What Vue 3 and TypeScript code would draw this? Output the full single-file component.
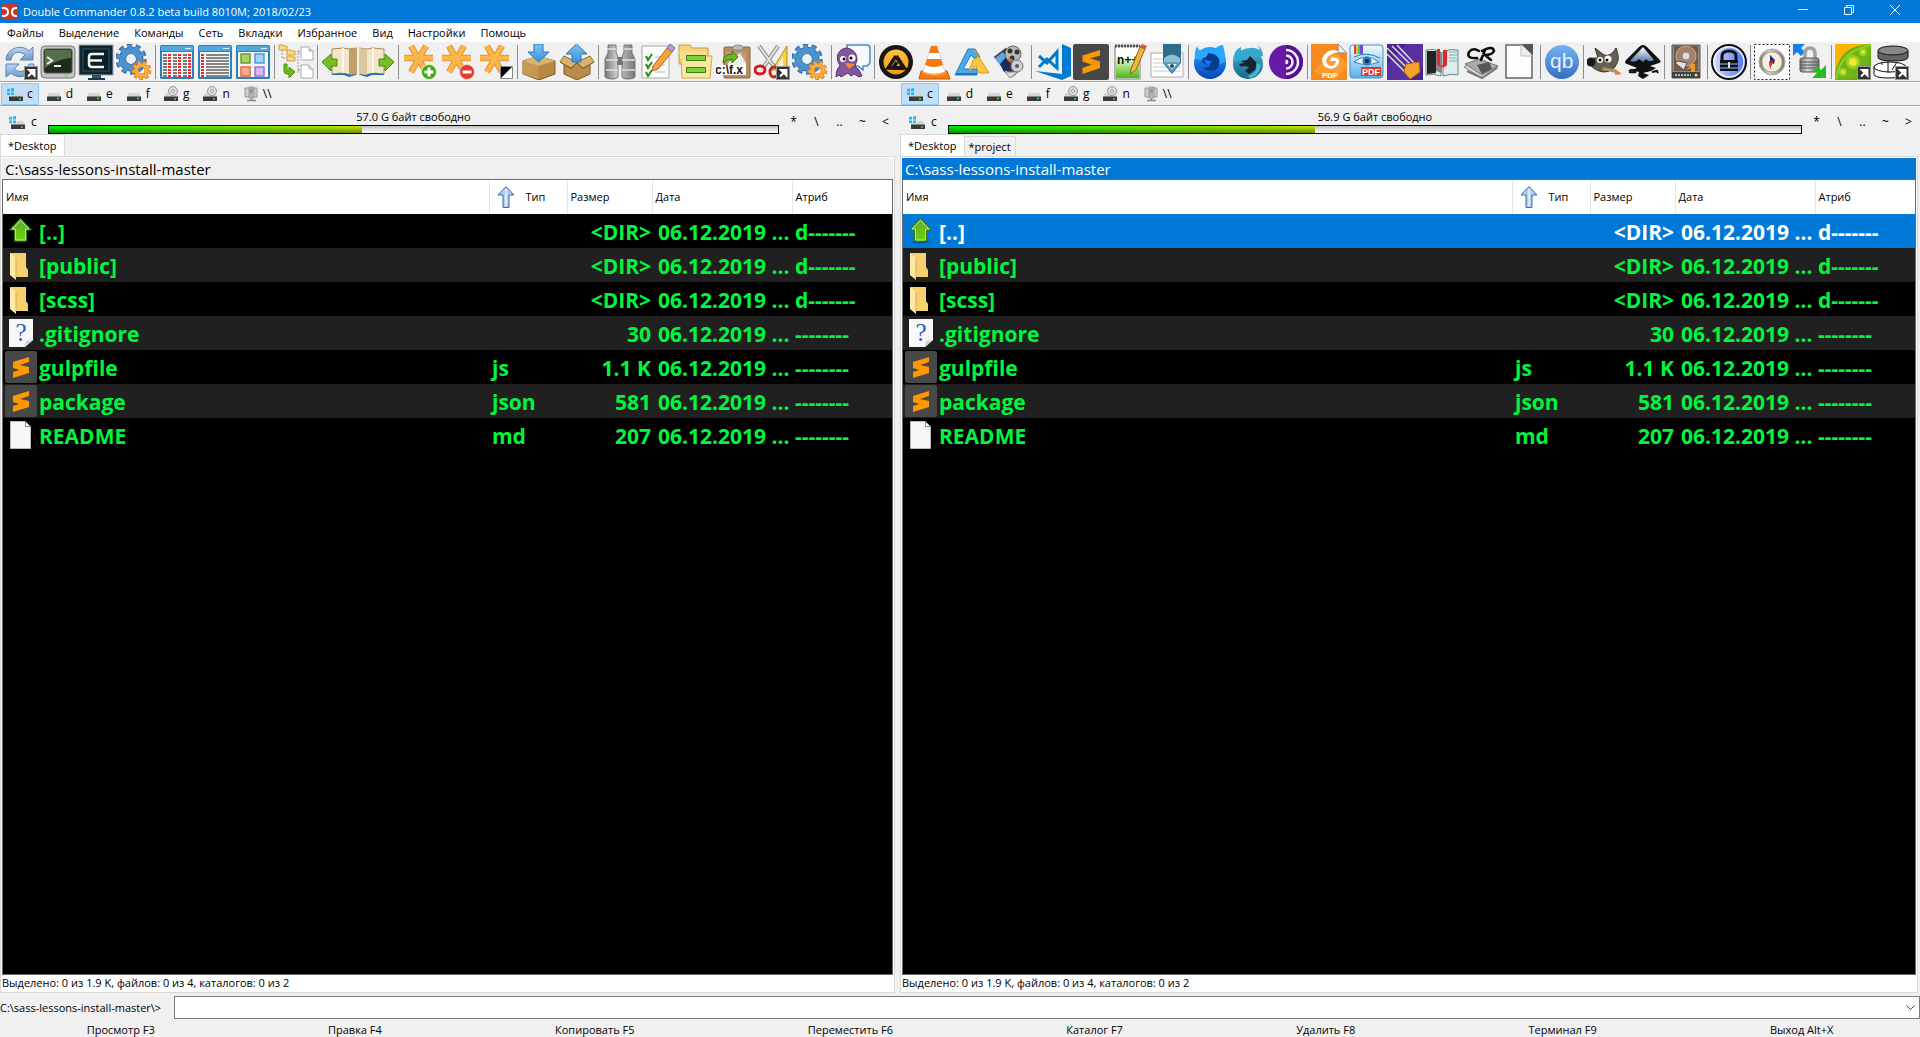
<script setup lang="ts">
import { ref } from 'vue'

interface FileRow { icon: string; name: string; ext: string; size: string; attr: string }
interface Panel { id: string; free: string; used: number; arrow: string; tabs: string[]; active: boolean }

const menu = ['Файлы', 'Выделение', 'Команды', 'Сеть', 'Вкладки', 'Избранное', 'Вид', 'Настройки', 'Помощь']

const groups: string[][] = [
  ['refresh', 'terminal', 'console', 'gears'],
  ['brief', 'full', 'thumbs'],
  ['tree'],
  ['bookLeft', 'bookRight'],
  ['starPlus', 'starMinus', 'starInvert'],
  ['pack', 'unpack'],
  ['binoculars', 'checklist', 'syncdirs', 'copyname', 'scissors', 'gears'],
  ['pidgin'],
  ['aimp', 'vlc', 'alpha', 'movie'],
  ['vscode', 'sublime', 'notepad', 'pen'],
  ['firefox', 'waterfox', 'tor'],
  ['foxit', 'viewer', 'clip', 'reader', 'coolreader', 'office'],
  ['qb'],
  ['gimp', 'inkscape'],
  ['disk'],
  ['keepass'],
  ['compass', 'unlocker'],
  ['pea', 'database'],
]

const drives = [
  { name: 'c', icon: 'system' }, { name: 'd', icon: 'hdd' }, { name: 'e', icon: 'hdd' }, { name: 'f', icon: 'hdd' },
  { name: 'g', icon: 'optical' }, { name: 'n', icon: 'optical' }, { name: '\\\\', icon: 'network' },
]

const panels: Panel[] = [
  { id: 'left', free: '57.0 G байт свободно', used: 43, arrow: '<', tabs: ['*Desktop'], active: false },
  { id: 'right', free: '56.9 G байт свободно', used: 43, arrow: '>', tabs: ['*Desktop', '*project'], active: true },
]

const files: FileRow[] = [
  { icon: 'up', name: '[..]', ext: '', size: '<DIR>', attr: 'd-------' },
  { icon: 'folder', name: '[public]', ext: '', size: '<DIR>', attr: 'd-------' },
  { icon: 'folder', name: '[scss]', ext: '', size: '<DIR>', attr: 'd-------' },
  { icon: 'unknown', name: '.gitignore', ext: '', size: '30', attr: '--------' },
  { icon: 'subl', name: 'gulpfile', ext: 'js', size: '1.1 K', attr: '--------' },
  { icon: 'subl', name: 'package', ext: 'json', size: '581', attr: '--------' },
  { icon: 'page', name: 'README', ext: 'md', size: '207', attr: '--------' },
]

const keys = ['Просмотр F3', 'Правка F4', 'Копировать F5', 'Переместить F6', 'Каталог F7', 'Удалить F8', 'Терминал F9', 'Выход Alt+X']
const command = ref('')

const link = '<rect x="22.5" y="22.5" width="13" height="13" fill="#333" stroke="#999"/><path d="M26 32.5 31 27.5M27 26h5.5v5.5z" stroke="#fff" stroke-width="2" fill="#fff"/>'
const starArms = 'M2 14h29M9 2l15 26M24 2 9 28'
const star = `<path d="${starArms}" stroke="#e59331" stroke-width="6.5" fill="none"/><path d="${starArms}" stroke="#fbb64a" stroke-width="4.5" fill="none"/>`
const windowFrame = '<rect x="1" y="1" width="34" height="34" rx="1.5" fill="#2d7fb5"/><rect x="2" y="2" width="32" height="5" fill="#4fa9dd"/><rect x="3" y="8" width="30" height="25" fill="#f3f6f8"/><path d="M26 4.5h6" stroke="#d8efff"/>'
const gear = (cx: number, cy: number, r: number, fill: string, edge: string, teeth: number): string => {
  const c = 2 * Math.PI * r
  const d = c / teeth
  return `<circle cx="${cx}" cy="${cy}" r="${r}" fill="none" stroke="${edge}" stroke-width="${r * 0.62}" stroke-dasharray="${d * 0.58} ${d * 0.42}"/><circle cx="${cx}" cy="${cy}" r="${r * 0.72}" fill="none" stroke="${edge}" stroke-width="${r * 0.62}"/><circle cx="${cx}" cy="${cy}" r="${r * 0.7}" fill="none" stroke="${fill}" stroke-width="${r * 0.48}"/><circle cx="${cx}" cy="${cy}" r="${r}" fill="none" stroke="${fill}" stroke-width="${r * 0.42}" stroke-dasharray="${d * 0.5} ${d * 0.5}" stroke-dashoffset="${-d * 0.04}"/>`
}
const cells = (() => {
  let s = ''
  for (let y = 0; y < 8; y++) {
    for (let x = 0; x < 6; x++) s += `<rect x="${4 + x * 5}" y="${10 + y * 3}" width="${x % 2 ? 3 : 4}" height="2" fill="${x % 2 ? '#f22' : '#777'}"/>`
  }
  return s
})()
const lines = (() => {
  let s = ''
  for (let y = 0; y < 8; y++) s += `<rect x="4" y="${10 + y * 3}" width="3" height="2" fill="#f22"/><rect x="9" y="${10 + y * 3}" width="23" height="2" fill="#858585"/>`
  return s
})()
const sublimeS = '<path d="M27 6 9.5 11.5v6L27 23.5v-6L17 14.5l10-3z" fill="#ff9800"/><path d="M27 17.5v6.5L9.5 30v-6z" fill="#ff9800"/><path d="M19 14.5 27 17.5v3l-9 .5z" fill="#f08a00" opacity=".6"/>'

const icons: Record<string, string> = {
  refresh: '<path d="M4 16C4 5 19-1 27 7l4-4v13H18l5-5C17 6 10 8 9 16z" fill="url(#gSteel)" stroke="#5b82b5"/><path d="M32 20c0 11-15 17-23 9l-5 4V20h13l-5 5c6 5 13 2 15-5z" fill="url(#gSteel)" stroke="#5b82b5"/>' + link,
  terminal: '<rect x="1" y="2" width="34" height="32" rx="4" fill="#c4c5c0" stroke="#777"/><rect x="4" y="5" width="28" height="24" rx="2" fill="#1f2b1c" stroke="#555"/><path d="M5 6h26v8c-10 1-18 4-26 10z" fill="#53704a"/><path d="M7 13l5 3.5L7 20M14 22h7" stroke="#e4f3dd" stroke-width="2" fill="none"/><circle cx="26" cy="31" r="1.5" fill="#7be04a"/>',
  console: '<rect x="1" y="1" width="34" height="30" fill="#11272e" stroke="#9aa3a6"/><rect x="5" y="5" width="26" height="22" fill="#082029" stroke="#35515a"/><path d="M26 10H14q-3 0-3 3v7q0 3 3 3h12M12 16.5h12" stroke="#f5f1e4" stroke-width="2.5" fill="none"/><path d="M10 34h17v2H10z" fill="#1c3c48"/><path d="M14 31h9v3h-9z" fill="#29566a"/>',
  gears: gear(15, 15, 12, '#4c92cf', '#2e6ea8', 10) + gear(25.5, 26.5, 7.5, '#f9ac3c', '#cf6d12', 9),
  brief: windowFrame + cells,
  full: windowFrame + lines,
  thumbs: windowFrame + '<rect x="6" y="10" width="9" height="9" fill="#a8cf6a" stroke="#6ca02d" stroke-width="1.5"/><rect x="20" y="10" width="9" height="9" fill="#9fd0f5" stroke="#4d9bd6" stroke-width="1.5"/><rect x="6" y="23" width="9" height="9" fill="#f7a98a" stroke="#e06a3c" stroke-width="1.5"/><rect x="20" y="23" width="9" height="9" fill="#d8b7f5" stroke="#a070d8" stroke-width="1.5"/>',
  tree: '<path d="M4 6v8h8M20 6v24M20 8h4M20 26h4" stroke="#999" stroke-dasharray="2 1" fill="none"/><path d="M1 1h4l1 1h3v4H1zM9 6h4l1 1h3v4H9zM9 12h4l1 1h3v4H9z" fill="#f9d980" stroke="#d6a03a"/><path d="M23 3h8l4 4v9H23zM23 21h8l4 4v9H23z" fill="#fff" stroke="#aaa"/><path d="M31 3v4h4M31 21v4h4" fill="#ddd" stroke="#aaa"/><path d="M6 20v7q0 3 3 3h2v4l6-6-6-5v4H9v-7z" fill="#6cc01c" stroke="#498d0b"/>',
  bookLeft: '<path d="M11 5v25l11-1 6 2 8-1V4l-8 1-6-1z" fill="#f3e5c9" stroke="#a98a57"/><path d="M11 31l12 0 5 2 7-2v-2l-7 1-6-1-11 1z" fill="#2d6fa8"/><path d="M28 5v26l8-1V4z" fill="#bfa06c"/><path d="M22 4v25" stroke="#fff8e8" stroke-width="2"/><path d="M1 18 10 10v5h6v7h-6v5z" fill="#76bf24" stroke="#478a0b"/>',
  bookRight: '<path d="M25 5v25l-11-1-6 2-8-1V4l8 1 6-1z" fill="#f3e5c9" stroke="#a98a57"/><path d="M25 31l-12 0-5 2-7-2v-2l7 1 6-1 11 1z" fill="#2d6fa8"/><path d="M8 5v26l-8-1V4z" fill="#dcc59a"/><path d="M14 4v25" stroke="#fff8e8" stroke-width="2"/><path d="M35 18 26 10v5h-6v7h6v5z" fill="#76bf24" stroke="#478a0b"/>',
  starPlus: star + '<circle cx="27" cy="28" r="7.5" fill="#3fa914" stroke="#dff2d8"/><path d="M27 23.5v9M22.5 28h9" stroke="#fff" stroke-width="3"/>',
  starMinus: star + '<circle cx="27" cy="28" r="7.5" fill="#e3392f" stroke="#f7d3d0"/><path d="M22.5 28h9" stroke="#fff" stroke-width="3"/>',
  starInvert: star + '<path d="M22.5 22.5h12v12h-12z" fill="#fff" stroke="#888"/><path d="M23 23h11L23 34z" fill="#000"/>',
  pack: '<path d="M2 17 17 12l17 5v13l-16 6L2 30z" fill="#b88944" stroke="#80591f"/><path d="M2 17l15 5 17-5-17-6z" fill="#dbb36e"/><path d="M2 17l15 5v13L2 30z" fill="#c79a52"/><path d="M13 0h9v8h6L17.5 18 7 8h6z" fill="url(#gSky)" stroke="#2f78b8"/>',
  unpack: '<path d="M5 18l13-4 13 4v12l-13 6L5 30z" fill="#b98c48" stroke="#80591f"/><path d="M5 12 18 18 12 25 1 18zM31 12 18 18l6 7 11-7z" fill="#d8b270" stroke="#936b2c"/><path d="M13 18h9v-8h6L17.5 0 7 10h6z" fill="url(#gSky)" stroke="#2f78b8"/><path d="M1 18l11 6 6-5 6 5 11-6" fill="none" stroke="#8b6426"/>',
  binoculars: '<path d="M6 1h8v7l2 5v20q-1 2-6 2t-7-2V15l3-6zM22 1h8v8l3 6v18q-1 2-7 2t-6-2V13l2-5z" fill="url(#gMetal)" stroke="#777"/><path d="M15 13h6v8h-6z" fill="#777"/><path d="M5 5h9M22 5h9M4 26h12M20 26h13M4 16h12M20 16h13" stroke="#e0e0e0" stroke-width="1.5"/>',
  checklist: '<path d="M2 2h27v32H2z" fill="#fafafa" stroke="#aaa"/><path d="M15 13h11M15 21h10M15 28h10" stroke="#bbb"/><path d="M6 12l2 4 4-6M6 20l2 4 4-6M6 28l2 4 4-6" stroke="#268c17" stroke-width="2" fill="none"/><path d="M13 22 28 3l5 4-15 18-6 2z" fill="#f5a33a" stroke="#a86c22"/><path d="M27 4l3-4 5 4-3 4z" fill="#b79bd8" stroke="#7d62a0"/>',
  syncdirs: '<path d="M1 1h11l2 3h16v16H1z" fill="#f6d379" stroke="#c99a35"/><path d="M3 15h10l3-3h18l-2 22H4z" fill="#fbe5a2" stroke="#d2a744"/><path d="M1 7h28l-2 11H3z" fill="#fae09a" opacity=".7"/><path d="M8.5 11.5h19v5h-19zM8.5 23.5h19v5h-19z" fill="#7bd43c" stroke="#358008"/>',
  copyname: '<rect x="8" y="3" width="26" height="31" rx="1" fill="#b88c5e" stroke="#8a623a"/><path d="M10 8h20v22H10z" fill="#c49a6c"/><path d="M12 19 24 9l6 10v12H12z" fill="#eee"/><path d="M17 4q0-3 5-3t5 3v2H17z" fill="#bbb" stroke="#888"/><path d="M7 19q0-9 9-9V7l6 6-6 6v-4q-5 0-9 4z" fill="#67b928" stroke="#3a7b0c"/><rect x="0" y="21" width="30" height="10" fill="#fff"/><text x="-1" y="30" font-family="Liberation Sans" font-weight="700" font-size="12" fill="#111">c:\\f.x</text>',
  scissors: '<path d="M33 2v24H18z" fill="#f7d14c" stroke="#b18a19"/><path d="M29 13v9h-6z" fill="#fff6cc"/><path d="M5 2l16 22M24 2 9 24" stroke="#8c8c8c" stroke-width="4"/><path d="M5 2l16 22M24 2 9 24" stroke="#e4e4e4" stroke-width="2"/><ellipse cx="6" cy="26" rx="5" ry="4" fill="none" stroke="#d31d1d" stroke-width="3"/><ellipse cx="20" cy="28" rx="4" ry="5" fill="none" stroke="#d31d1d" stroke-width="3"/>' + link,
  pidgin: '<path d="M12 1h20q3 0 3 3v13q0 4-4 5l-3 0 0 4-5-4H12z" fill="#f7fbff" stroke="#4f86c4" stroke-width="1.5"/><path d="M1 33q0-8 4-11Q-1 12 6 6q6-4 11 0 5 3 5 10l-2 6q5 4 7 10l-3 1-5-3-3 2-3-3-7 4-2-2z" fill="#82559d" stroke="#583373"/><circle cx="8" cy="15" r="3" fill="#fff"/><circle cx="17" cy="14" r="3.5" fill="#fff"/><circle cx="9" cy="15" r="1.5"/><circle cx="16" cy="14" r="1.5"/><path d="M10 19l10 1-6 5z" fill="#f2902d"/>',
  aimp: '<circle cx="18" cy="18" r="17" fill="#171717"/><circle cx="18" cy="18" r="12.500" fill="url(#gOrange)"/><path d="M18 12 26 24H15" fill="none" stroke="#171717" stroke-width="4"/><path d="M18 12 10 24h5l4-6" fill="none" stroke="#171717" stroke-width="3.500"/>',
  vlc: '<path d="M5 27h26l3 8H3z" fill="#f47a11" stroke="#c95900"/><path d="M15 2h6l8 26q-11 5-22 0z" fill="#fff" stroke="#d6d6d6"/><path d="M15 2h6l2 7h-10zM11 15h14l2 6q-9 4-18 0z" fill="#f47a11"/><path d="M6 27q12 6 24 0l0 2q-12 6-24 0z" fill="#ff9d3a"/>',
  alpha: '<path d="M14 5h7l5 8-6 1-3-3-8 14h14v6H1z" fill="#4ba9ec" stroke="#2479bd"/><path d="M20 5 35 29H25l-3-7-7 5 4-11 5-3z" fill="#fbc83f" stroke="#d09a20"/><path d="M3 29h20v2H1z" fill="#2274b8"/>',
  movie: '<path d="M2 13 14 4l17 20-11 9z" fill="#334" stroke="#777"/><path d="M3 14 11 8l10 13-9 6z" fill="#5fa8e8"/><path d="M8 20l6-7 7 9-9 6z" fill="#1b2c58"/><circle cx="21" cy="10" r="8" fill="#b9b9b9" stroke="#666"/><circle cx="18" cy="7" r="2.5" fill="#333"/><circle cx="25" cy="8" r="2.5" fill="#333"/><circle cx="20" cy="14" r="2.5" fill="#333"/><circle cx="25" cy="22" r="6" fill="#cfcfd8" stroke="#777"/><circle cx="25" cy="22" r="2" fill="#556"/><circle cx="18" cy="16" r="2" fill="#e56a1e"/><path d="M13 28l13 0-8 6z" fill="#ddd" stroke="#888"/>',
  vscode: '<path d="M27 0l9 4v28l-9 4L0 27l27 3z" fill="#007acc"/><path d="M4 12l8 7L22 8v16L12 15l-8 8" fill="none" stroke="#007acc" stroke-width="3"/>',
  sublime: '<rect width="36" height="36" rx="2" fill="#484848"/>' + sublimeS,
  notepad: '<path d="M4 2h25v33H4z" fill="#fff" stroke="#777"/><path d="M5 14h23v20H5z" fill="url(#gLime)"/><path d="M4 2h25" stroke="#555" stroke-width="3" stroke-dasharray="2 1"/><text x="6" y="20" font-family="Liberation Mono" font-weight="700" font-size="12" fill="#111">n++</text><path d="M20 25 29 3l5 2-9 21-6 4z" fill="#f0b73c" stroke="#8c651d"/><path d="M29 3l2-3 5 2-2 4z" fill="#c95a4e"/>',
  pen: '<path d="M2 9h32v24H2z" fill="#fff" stroke="#aaa"/><path d="M4 15h28M4 19h28M4 23h28M4 27h28" stroke="#c9c9c9"/><path d="M14 0h18v19l-9 11-9-11z" fill="#2e6b8d"/><path d="M16 19h14l-7 8z" fill="#fff" stroke="#5aa0be" stroke-width="2"/><path d="M15 14q8-7 16 0v4H15z" fill="#93bdd1"/><circle cx="23" cy="22" r="2" fill="#1c526f"/>',
  firefox: '<circle cx="18" cy="19" r="16" fill="url(#gFox)"/><path d="M3 15Q2 8 5 2q1 5 6 5 6-3 11-1 4-5 9-5 2 8 3 16l-7 4-8-8-9 3z" fill="#28a8ff"/><path d="M11 14q4 0 5-5 8 0 11 6 2 8-4 11-8 3-12-3 5 2 8-2-7 1-9-4z" fill="#073b91"/><path d="M12 15q3 2 8 2l-3 4q-4 0-5-6z" fill="#1478eb"/>',
  waterfox: '<circle cx="18" cy="20" r="15" fill="url(#gWater)"/><path d="M3 18q0-12 8-15l0 4q9-6 19-1l-2-5q5 5 5 11z" fill="#36a7cf"/><path d="M20 12l7 7-2 7-6 4-4-3 4-4-5-1q-4 2-5-2 6-1 8-4z" fill="#17242c"/><path d="M11 17l7-1 5 5-5-1z" fill="#15232b"/><path d="M17 32q12-4 9-13l5 2q-2 11-10 13z" fill="#4ab5d6"/>',
  tor: '<circle cx="18" cy="18" r="17" fill="#671aa4"/><path d="M18 1a17 17 0 0 1 0 34z" fill="#54108f"/><path d="M18 6a12 12 0 0 1 0 24M18 11.500a6.500 6.500 0 0 1 0 13" stroke="#f1ebff" stroke-width="2.500" fill="none"/><path d="M18 16a2 2 0 0 1 0 4z" fill="#fff" stroke="#fff"/>',
  foxit: '<path d="M0 0h27l9 9v27H0z" fill="#f58b1e"/><path d="M27 0l9 9h-9z" fill="#eee" stroke="#888"/><path d="M3 27 23 7l13 13v3L23 36z" fill="#ffa944" opacity=".6"/><path d="M28 8q-5-4-12 0-8 6-3 14 8 6 14-1 3-6-2-7l-4-1-2 4 6 0q-1 5-5 5-7-2-4-8 4-5 12-6z" fill="#fff"/><text x="11" y="34" font-family="Liberation Sans" font-weight="700" font-size="8" fill="#fff">PDF</text>',
  viewer: '<rect x="1" y="1" width="33" height="33" rx="3" fill="url(#gView)" stroke="#478fc5"/><path d="M5 1h2v9H5z" fill="#f33"/><path d="M7 1h2v9H7z" fill="#fb3"/><path d="M9 1h2v9H9z" fill="#4c4"/><path d="M11 1h3v9h-3z" fill="#74d"/><path d="M5 18q12-10 25 0-12 5-25 0z" fill="#e8f5fc" stroke="#3d7fb0"/><circle cx="18" cy="17" r="4.500" fill="#247fc2"/><circle cx="18" cy="17" r="2" fill="#123"/><path d="M5 13q12-6 26 1" fill="none" stroke="#267ab8"/><rect x="12" y="23" width="20" height="9" fill="#e73325"/><text x="13" y="31" font-family="Liberation Sans" font-weight="700" font-size="9" fill="#fff">PDF</text>',
  clip: '<rect width="36" height="36" fill="#4b258f"/><path d="M0 20 20 0h16v22L22 36H0z" fill="#6a39b5" opacity=".5"/><path d="M0 4 22 26M5 2l19 19M10 1l17 18M0 10l18 18" stroke="#ddd" stroke-width="1.500"/><path d="M1 6 22 27M6 4l18 18" stroke="#888"/><path d="M19 20l13-2 1 10-10 7-6-7z" fill="#f5a12b" stroke="#b46a0b"/>',
  reader: '<path d="M1 6q8-2 15 2v24q-8-3-15-1zM33 6q-8-2-15 2v24q8-3 15-1z" fill="#ddecef" stroke="#6d8689"/><path d="M2 7l9 0v22l-9 1z" fill="#222"/><path d="M11 6l6 3v20l-6-2z" fill="#888"/><path d="M12 5h3v16q3 2 3-1V6h4v15q-3 4-8 1l-2-2z" fill="#e42922"/><path d="M24 8h8M24 11h8M24 14h8M24 17h8" stroke="#79aeb5"/>',
  coolreader: '<path d="M1 23l15-8 19 8-16 11z" fill="#ddd" stroke="#888"/><path d="M2 20l14-5 19 7-16 9z" fill="#aaa" stroke="#777"/><path d="M4 27l15 7 15-10" fill="none" stroke="#777" stroke-width="2"/><path d="M14 21l12-3 3 7-10 5z" fill="#555"/><path d="M16 7Q10 3 6 8q-3 7 8 6M22 6l-4 10M19 7q11-6 12 0-2 4-9 4l6 5" fill="none" stroke="#080808" stroke-width="2.500" stroke-linecap="round"/>',
  office: '<path d="M5 1h17l9 9v24H5z" fill="#fdfdfd" stroke="#666" stroke-width="1.5"/><path d="M21 0h11v11z" fill="#555"/><path d="M20 1v11h11" fill="#ededed" stroke="#bbb"/>',
  qb: '<circle cx="18" cy="18" r="17" fill="url(#gQb)"/><text x="6" y="24" font-family="Liberation Sans" font-size="21" fill="#e7f2ff">qb</text>',
  gimp: '<path d="M1 17q5-4 10-3L8 4l9 7q7 2 12-7 4 10 1 15-3 9-14 9Q5 26 1 17z" fill="#675e52" stroke="#3b352d"/><circle cx="13" cy="16" r="3" fill="#fff"/><circle cx="21" cy="15" r="3.5" fill="#fff"/><circle cx="13" cy="16" r="1.5"/><circle cx="20" cy="16" r="1.5"/><circle cx="4" cy="18" r="4.5" fill="#171717"/><path d="M16 23l14 3-1 3-14-3z" fill="#b49262"/><path d="M28 25l7 5-7 1z" fill="#e88033"/>',
  inkscape: '<path d="M18 1q2 0 4 2l12 12q3 3 0 4l-9 3 6 2-5 3-8 2 6 2-6 4-5-3 1-4-7-2 5-2-10-4q-4-1 0-5L14 3q2-2 4-2z" fill="#111"/><path d="M18 3 5 17q6 2 9-2l4 3 3-3q3 4 8 1z" fill="url(#gInk)"/><path d="M4 27q3-2 6 0t-6 1M27 28l5-1 1 2" stroke="#111" stroke-width="2" fill="none"/>',
  disk: '<path d="M4 1h28v33H4z" fill="#8c8c8c" stroke="#555"/><path d="M6 2h24v25H6z" fill="#75594a"/><circle cx="18" cy="12" r="10" fill="#a57f68" stroke="#c7a893"/><circle cx="18" cy="12" r="4" fill="#ddd" stroke="#888"/><path d="M7 19l9 7 3-7-9-2z" fill="#ddd" stroke="#555"/><path d="M18 26l4-4v-2h5v9h-4v-5" fill="#e49a35"/><path d="M4 28h28v6H4z" fill="#424242"/><path d="M7 31h16" stroke="#bbb" stroke-width="2" stroke-dasharray="2 1"/><circle cx="28" cy="31" r="1.5" fill="#e9e43a"/>',
  keepass: '<circle cx="18" cy="18" r="17" fill="url(#gKey)" stroke="#111" stroke-width="2"/><circle cx="18" cy="18" r="15" fill="none" stroke="#eaf0ff" stroke-width="1.5"/><path d="M11 17v-5q0-5 7-5t7 5v5" fill="none" stroke="#111" stroke-width="3"/><path d="M9 16h18v11H9z" fill="#111"/><path d="M9 20h18M9 24h18" stroke="#9eb4ff"/><path d="M18 18v6" stroke="#dce4ff" stroke-width="2"/>',
  compass: '<rect x=".5" y=".5" width="35" height="35" fill="#fdfdfd" stroke="#222" stroke-dasharray="2 2"/><circle cx="18" cy="18" r="13" fill="url(#gMetal)" stroke="#aaa"/><circle cx="18" cy="18" r="10" fill="#f8f5e8" stroke="#b8a777"/><circle cx="18" cy="18" r="7" fill="none" stroke="#d3b46e" stroke-dasharray="1 2"/><path d="M16 11l5 5-1 4-4-2z" fill="#23237e"/><path d="M20 16l-4 9-1-8z" fill="#d62116"/>',
  unlocker: '<path d="M1 0h12l-4 4 4 4-4 4-4-4-4 4z" fill="#187ee9"/><path d="M13 16v-6q0-6 5-6t5 6v6" fill="none" stroke="#a2a2a2" stroke-width="3.500"/><rect x="8" y="14" width="19" height="14" rx="2" fill="url(#gMetal)" stroke="#555"/><path d="M8 18h19M8 21h19M8 24h19" stroke="#555"/><path d="M34 34H20l5-5-4-4 4-3 4 4 5-5z" fill="#25bd24"/>',
  pea: '<rect width="36" height="36" fill="#68ae12"/><path d="M0 0h36Q4 1 0 30z" fill="#ffb300"/><path d="M1 35Q0 4 36 1q0 31-28 35z" fill="#6fb519"/><path d="M1 35Q5 7 36 1" stroke="#8ed126" stroke-width="2" fill="none"/><circle cx="18" cy="18" r="5.5" fill="#f2e533" stroke="#99d21c" stroke-width="3"/><circle cx="28" cy="8" r="3" fill="#e2e82b" stroke="#99d21c" stroke-width="2"/><circle cx="8" cy="28" r="3" fill="#e2e82b" stroke="#99d21c" stroke-width="2"/>' + link,
  database: '<path d="M5 7v6q0 4 15 4t15-4V7" fill="#666" stroke="#111"/><ellipse cx="20" cy="6.5" rx="15" ry="4.5" fill="#888" stroke="#111"/><path d="M1 23v7q0 4 15 4t17-4v-7" fill="#fff" stroke="#111"/><ellipse cx="17" cy="23" rx="16" ry="5" fill="#fff" stroke="#111"/><path d="M15 17v12M9 18v3M24 18l-5 8" stroke="#111"/>' + link,
}

const hdd = '<path d="M3 7h10l2 4v4H1v-4z" fill="#d4d4d4"/><path d="M1 10.500h14V15H1z" fill="#3a3a3a"/><path d="M11 12.500h2" stroke="#2fe63a" stroke-width="1.500"/>'
const driveIcons: Record<string, string> = {
  system: '<path d="M0 3l3-.5v3H0zM4 2.500 7 2v3.500H4zM0 6.500h3v3L0 9zM4 6.500h3v3.500l-3-.5z" fill="#1dbcf2"/><path d="M8 7h6l1.500 3.500H2V9h6z" fill="#d4d4d4"/><path d="M2 10.500h14V15H2z" fill="#3a3a3a"/><path d="M12 13h2" stroke="#2fe63a" stroke-width="1.500"/>',
  hdd,
  optical: hdd + '<circle cx="10" cy="5" r="4.500" fill="#ddd" stroke="#999"/><circle cx="10" cy="5" r="1.500" fill="#fff" stroke="#999"/><path d="M1 11h14v4H1z" fill="#3a3a3a"/><path d="M11 13h2" stroke="#2fe63a" stroke-width="1.500"/>',
  network: '<path d="M2 2h5v9H2zM9 2h5v9H9zM6 1h5v11H6z" fill="#ccc" stroke="#999"/><path d="M7 4h3M7 6h3" stroke="#777"/><path d="M8.500 12v2M4 14.500h9" stroke="#888" stroke-width="1.500"/>',
}

const fileIcons: Record<string, string> = {
  up: '<ellipse cx="16" cy="27" rx="9" ry="1.5" fill="#234" opacity=".4"/><path d="M15.5 3.5 26.5 15h-5v11h-12V15h-5z" fill="url(#gGreen)" stroke="#2e7a08"/><path d="M15.5 5.5 24 14h-3.500v11h-10V14H7z" fill="none" stroke="#b6e58c"/>',
  folder: '<path d="M5 4h16v14l2 3v7H10z" fill="#f5d06f"/><path d="M5 4l6 5v22l-6-5z" fill="#ffe9a6"/><path d="M10 9v22l2-4V9z" fill="#d9ae4c" opacity=".5"/>',
  unknown: '<path d="M4 2h24v21l-8 7H4z" fill="#f8f8f8"/><path d="M28 23l-8 7 1-6z" fill="#cfcfcf"/><text x="16" y="24" text-anchor="middle" font-family="Liberation Serif" font-size="25" font-weight="400" fill="#1d63bd">?</text>',
  subl: '<rect width="32" height="32" rx="2" fill="#484848"/><path d="M24 6 8 11v6l16 5v-6l-9-2 9-3z" fill="#ff9800"/><path d="M24 16v6L8 27v-6z" fill="#ff9800"/>',
  page: '<path d="M5.5 2.5h15l5 5v22h-20z" fill="#f7f7f7" stroke="#bbb"/><path d="M20.5 2.5v5h5z" fill="#fff" stroke="#888"/>',
}
</script>

<template>
  <div class="app">
    <svg class="defs" aria-hidden="true">
      <defs>
        <linearGradient id="gSteel" x2="0" y2="1"><stop stop-color="#c3d7ee" /><stop offset="1" stop-color="#6c98cc" /></linearGradient>
        <linearGradient id="gOrange" x2="0" y2="1"><stop stop-color="#fdc046" /><stop offset="1" stop-color="#f79c0f" /></linearGradient>
        <linearGradient id="gSky" x2="0" y2="1"><stop stop-color="#7cc4f2" /><stop offset="1" stop-color="#3c93d8" /></linearGradient>
        <linearGradient id="gMetal"><stop stop-color="#777" /><stop offset=".4" stop-color="#d0d0d0" /><stop offset="1" stop-color="#777" /></linearGradient>
        <linearGradient id="gLime" x2="0" y2="1"><stop stop-color="#e9fbd0" /><stop offset="1" stop-color="#4cb816" /></linearGradient>
        <linearGradient id="gFox" x2="0" y2="1"><stop stop-color="#26a4ff" /><stop offset="1" stop-color="#0743b8" /></linearGradient>
        <linearGradient id="gWater" x2="0" y2="1"><stop stop-color="#44b4d8" /><stop offset="1" stop-color="#17658b" /></linearGradient>
        <linearGradient id="gView" x2="0" y2="1"><stop stop-color="#f3faff" /><stop offset="1" stop-color="#5cb0e6" /></linearGradient>
        <linearGradient id="gQb" x2="0" y2="1"><stop stop-color="#72b4f2" /><stop offset="1" stop-color="#356ebf" /></linearGradient>
        <linearGradient id="gInk" x2="0" y2="1"><stop stop-color="#fff" /><stop offset="1" stop-color="#4f79a8" /></linearGradient>
        <linearGradient id="gKey"><stop stop-color="#d4e0ff" /><stop offset="1" stop-color="#4a6fee" /></linearGradient>
        <linearGradient id="gGreen" x2="0" y2="1"><stop stop-color="#5fae2a" /><stop offset="1" stop-color="#6fd013" /></linearGradient>
      </defs>
    </svg>

    <header class="title">
      <svg class="logo" viewBox="0 0 16 16"><rect width="16" height="16" rx="2" fill="#c9372c" /><path d="M0 4h1.500q4.500 0 4.500 4t-4.500 4H0M15 4h-1q-4 0-4 4t4 4h1" fill="none" stroke="#fff" stroke-width="2" /></svg>
      <h1>Double Commander 0.8.2 beta build 8010M; 2018/02/23</h1>
      <button class="win" aria-label="Свернуть"><svg viewBox="0 0 10 10"><path d="M0 4.500h10" /></svg></button>
      <button class="win" aria-label="Восстановить"><svg viewBox="0 0 10 10"><path d="M.5 2.500h7v7h-7zM2.500 2.500v-2h7v7h-2" /></svg></button>
      <button class="win" aria-label="Закрыть"><svg viewBox="0 0 10 10"><path d="M0 0l10 10M10 0 0 10" /></svg></button>
    </header>

    <nav class="menu"><button v-for="m in menu" :key="m">{{ m }}</button></nav>

    <div class="toolbar">
      <div v-for="(g, i) in groups" :key="i" class="group">
        <button v-for="name in g" :key="name" :aria-label="name"><svg viewBox="0 0 36 36" v-html="icons[name]" /></button>
      </div>
    </div>

    <div class="drives">
      <div v-for="p in panels" :key="p.id" class="drivebar">
        <button v-for="d in drives" :key="d.name" class="drive" :class="{ on: d.name === 'c' }">
          <svg viewBox="0 0 16 16" v-html="driveIcons[d.icon]" />{{ d.name }}
        </button>
      </div>
    </div>

    <main class="panels">
      <section v-for="p in panels" :key="p.id" class="panel">
        <div class="info">
          <button class="drive current"><svg viewBox="0 0 16 16" v-html="driveIcons.system" />c</button>
          <div class="space">
            <span>{{ p.free }}</span>
            <div class="bar"><div class="fill" :style="{ width: p.used + '%' }" /></div>
          </div>
          <div class="jump"><button v-for="s in ['*', '\\', '..', '~', p.arrow]" :key="s">{{ s }}</button></div>
        </div>
        <div class="tabs"><button v-for="(t, i) in p.tabs" :key="t" :class="{ sel: i === 0 }">{{ t }}</button></div>
        <div class="sheet">
          <div class="path" :class="{ active: p.active }">C:\sass-lessons-install-master</div>
          <div class="list">
            <table>
              <colgroup><col><col class="c-ext"><col class="c-size"><col class="c-date"><col class="c-attr"></colgroup>
              <thead>
                <tr>
                  <th>Имя</th>
                  <th><span class="sort"><svg viewBox="0 0 18 22"><path d="M9 .5 17 9h-5v12.500H6V9H1z" fill="#b4cdeb" stroke="#3b69a8" /><path d="M9 3v17" stroke="#dce9f8" stroke-width="2" /></svg>Тип</span></th>
                  <th>Размер</th><th>Дата</th><th>Атриб</th>
                </tr>
              </thead>
              <tbody>
                <tr v-for="(f, i) in files" :key="f.name" :class="{ cursor: p.active && i === 0 }">
                  <td><div class="name"><svg viewBox="0 0 32 32" v-html="fileIcons[f.icon]" /><span>{{ f.name }}</span></div></td>
                  <td>{{ f.ext }}</td><td class="size">{{ f.size }}</td><td class="date">06.12.2019 ...</td><td>{{ f.attr }}</td>
                </tr>
              </tbody>
            </table>
          </div>
          <div class="status">Выделено: 0 из 1.9 K, файлов: 0 из 4, каталогов: 0 из 2</div>
        </div>
      </section>
    </main>

    <form class="command" @submit.prevent>
      <label for="cmd">C:\sass-lessons-install-master\&gt;</label>
      <div class="combo">
        <input id="cmd" v-model="command" type="text" autocomplete="off">
        <button type="button" aria-label="История"><svg viewBox="0 0 9 6"><path d="M.5.5l4 4 4-4" fill="none" stroke="#444" /></svg></button>
      </div>
    </form>

    <footer class="keys"><button v-for="k in keys" :key="k">{{ k }}</button></footer>
  </div>
</template>

<style>
html, body, #app { height: 100%; }
body { margin: 0; }
</style>

<style scoped>
.app { height: 100%; display: flex; flex-direction: column; background: #f0f0f0; color: #000; font: 11px/16px "Open Sans", "Noto Sans", sans-serif; overflow: hidden; }
.app * { box-sizing: border-box; }
button { font: inherit; color: inherit; background: none; border: 0; padding: 0; margin: 0; white-space: nowrap; }
svg { display: block; flex: none; }
.defs { position: absolute; width: 0; height: 0; }

.title { flex: none; height: 23px; display: flex; align-items: center; background: #0078d7; color: #fff; padding: 0 2px; }
.logo { width: 16px; height: 16px; margin-right: 5px; }
.title h1 { flex: 1; margin: 0; font: inherit; }
.win { width: 46px; height: 20px; align-self: flex-start; display: flex; align-items: center; justify-content: center; }
.win svg { width: 10px; height: 10px; fill: none; stroke: #fff; }

.menu { flex: none; height: 19px; display: flex; align-items: center; gap: 15px; padding: 0 7px; background: #fff; }

.toolbar { flex: none; height: 40px; display: flex; align-items: flex-end; padding-left: 1px; border-bottom: 1px solid #a0a0a0; }
.group { display: flex; }
.group + .group::before { content: ""; width: 1px; height: 34px; margin: 2px 2px 0; background: #8c8c8c; }
.group button { width: 38px; height: 38px; display: flex; align-items: center; justify-content: center; }
.group svg { width: 36px; height: 36px; overflow: hidden; }

.drives, .panels { display: grid; grid-template-columns: 895fr 1018fr; column-gap: 5px; padding-right: 2px; }
.drives { flex: none; height: 24px; border-top: 1px solid #fff; border-bottom: 1px solid #a0a0a0; }
.drivebar { display: flex; align-items: center; gap: 1px; padding-left: 1px; }
.drive { height: 22px; display: flex; align-items: center; gap: 4px; padding: 0 5px; border: 1px solid transparent; font-size: 12px; }
.drive svg { width: 16px; height: 16px; }
.drive.on { background: #c2def5; border-color: #90c8f6; }

.panels { flex: 1; min-height: 0; border-top: 1px solid #fff; }
.panel { min-width: 0; display: flex; flex-direction: column; }
.info { flex: none; height: 27px; display: flex; }
.current { width: 48px; height: 30px; gap: 6px; padding-left: 8px; }
.space { flex: 1; display: flex; flex-direction: column; align-items: center; padding-top: 2px; }
.bar { width: 100%; height: 9px; border: 1px solid #000; background: linear-gradient(#c0c0c0, #fff); }
.fill { height: 100%; background: linear-gradient(transparent, #0006), linear-gradient(90deg, #00f400, #c3ee00); }
.jump { display: flex; padding-left: 3px; margin-right: -2px; font-size: 12px; }
.jump button { width: 23px; height: 30px; }
.tabs { flex: none; height: 22px; display: flex; align-items: flex-end; }
.tabs button { height: 20px; padding: 0 4px; background: #f0f0f0; border: 1px solid #d9d9d9; border-width: 1px 1px 0 0; }
.tabs button.sel { height: 22px; padding: 0 7px; background: #fff; border-width: 1px; border-bottom: 0; }
.sheet { flex: 1; min-height: 0; display: flex; flex-direction: column; border: 1px solid #d9d9d9; padding: 1px 1px 0; background: #fff; }
.path { flex: none; height: 21px; padding-left: 3px; background: #f0f0f0; font-size: 15px; line-height: 22px; }
.path.active { background: #0078d7; color: #fff; }
.list { flex: 1; min-height: 0; background: #000; border: 1px solid #696969; overflow: hidden; }
table { width: 100%; table-layout: fixed; border-collapse: collapse; }
.c-ext { width: 78px; } .c-size { width: 85px; } .c-date { width: 140px; } .c-attr { width: 100px; }
th { height: 34px; padding: 0 3px; text-align: left; font-weight: 400; background: #fff; border-right: 1px solid #e5e5e5; }
th:last-child { border-right: 0; }
.sort { display: flex; align-items: center; gap: 11px; padding-left: 4px; }
.sort svg { width: 18px; height: 22px; }
td { height: 34px; padding: 2px 3px 0; font-size: 21px; line-height: 32px; font-weight: 700; color: #00f53d; white-space: nowrap; overflow: hidden; }
td:first-child { padding: 0 2px; }
tbody tr:nth-child(even) { background: #202020; }
tbody tr.cursor { background: #0078d7; }
.cursor td { color: #fff; }
td.size { text-align: right; padding-right: 1px; }
td.date { padding-left: 6px; padding-right: 0; }
.name { height: 34px; display: flex; align-items: center; gap: 2px; }
.name svg { width: 32px; height: 32px; }
.name span { padding-top: 2px; }
.status { flex: none; height: 17px; line-height: 16px; }

.command { flex: none; display: flex; align-items: center; margin-top: 3px; }
.command label { width: 174px; white-space: nowrap; }
.combo { flex: 1; height: 23px; display: flex; background: #fff; border: 1px solid #7a7a7a; }
.combo input { flex: 1; border: 0; outline: 0; font: inherit; padding: 0 4px; }
.combo button { width: 17px; display: flex; align-items: center; justify-content: center; }
.combo svg { width: 9px; height: 6px; }
.keys { flex: none; height: 18px; display: flex; line-height: 14px; }
.keys button { flex: 1 1 auto; padding-top: 3px; }
</style>
